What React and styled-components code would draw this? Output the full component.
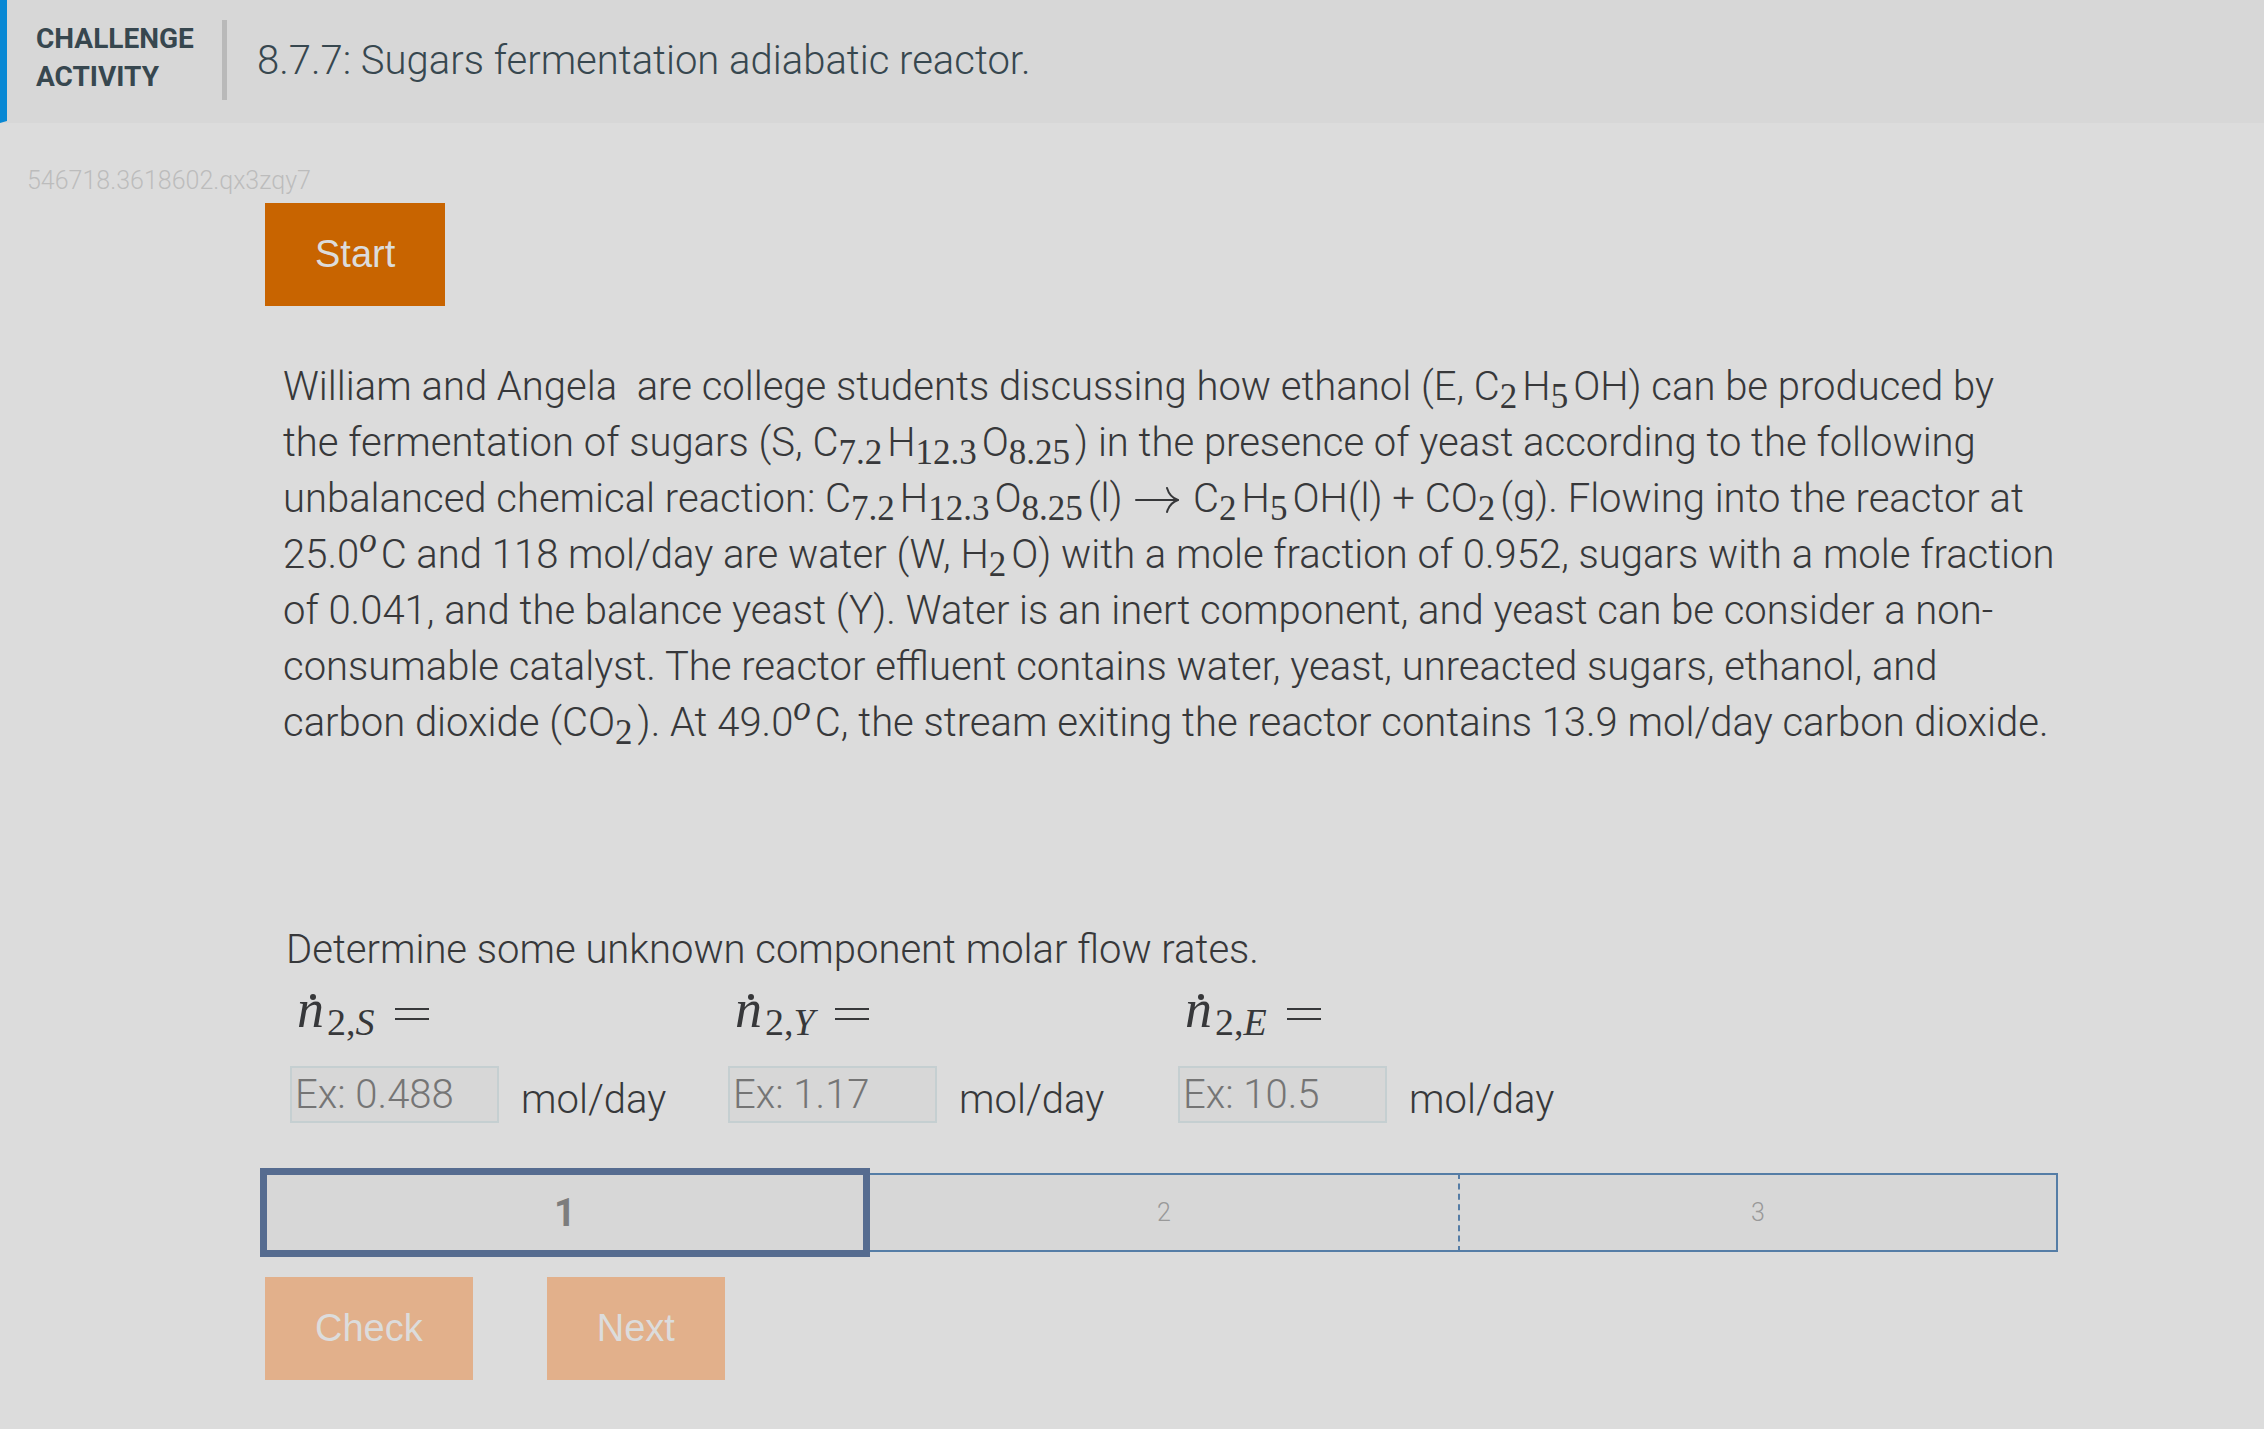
import { useState } from 'react'
import styled, { createGlobalStyle } from 'styled-components'

const GlobalStyle = createGlobalStyle`
    * {
        box-sizing: border-box;
    }

    body {
        margin: 0;
        background: #dcdcdc;
        color: #37383a;
        font-family: Roboto, sans-serif;
        font-weight: 300;
    }
`
const Header = styled.header`
    display: flex;
    align-items: flex-start;
    height: 123px;
    padding: 20px 29px 0;
    background: #d7d7d7;
    border-left: 7px solid #0888d4;
    border-bottom: 2px solid #d7d7d7;
    color: #37474f;
`
const HeaderLabel = styled.div`
    width: 186px;
    font-size: 28px;
    font-weight: 700;
    line-height: 38px;
    text-transform: uppercase;
`
const HeaderTitle = styled.h1`
    display: flex;
    align-items: center;
    height: 80px;
    margin: 0;
    padding-left: 30px;
    border-left: 5px solid #b9b9b9;
    font-size: 40px;
    font-weight: 300;
`
const Main = styled.main`
    padding: 44px 206px 49px 265px;
`
const ActivityId = styled.div`
    margin-left: -238px;
    color: #bcbcbc;
    font-size: 25px;
    line-height: 28px;
`
const Button = styled.button`
    height: 103px;
    padding: 0 50px;
    border: 0;
    background: #c86400;
    color: #dcdcdc;
    font-family: "Liberation Sans", Arial, sans-serif;
    font-size: 38px;
    cursor: pointer;

    &:disabled {
        background: #e2b08b;
        cursor: default;
    }
`
const StartButton = styled(Button)`
    display: block;
    margin-top: 8px;
`
const Problem = styled.p`
    margin: 53px 0 0 18px;
    font-size: 40px;
    line-height: 56px;
`
const Sub = styled.sub`
    margin-right: 5px;
    font-family: "Liberation Serif", serif;
    font-size: 35px;
    font-weight: 400;
    line-height: 0;
    vertical-align: -8px;
`
const Degree = styled.sup`
    margin-right: 4px;
    font-family: "Liberation Serif", serif;
    font-size: 35px;
    font-style: italic;
    font-weight: 400;
    line-height: 0;
    vertical-align: 16px;
`
const ArrowIcon = styled.svg`
    width: 44px;
    height: 26px;
    margin: 0 4px 0 3px;
    vertical-align: -1px;
`
const Question = styled.section`
    margin: 171px 0 0 21px;
`
const Prompt = styled.p`
    margin: 0;
    font-size: 40px;
    line-height: 56px;
`
const Fields = styled.div`
    display: grid;
    grid-template-columns: 438px 450px auto;
    margin-left: 4px;
`
const Field = styled.div`
    display: flex;
    flex-direction: column;
`
const FieldLabel = styled.label`
    display: block;
    height: 88px;
    padding-left: 7px;
    font-family: "Liberation Serif", serif;
    font-size: 54px;
    font-weight: 400;
    line-height: 62px;
`
const Symbol = styled.span`
    position: relative;
    font-style: italic;

    &::after {
        content: '';
        position: absolute;
        top: 15px;
        left: 13px;
        width: 6px;
        height: 6px;
        border-radius: 50%;
        background: currentColor;
    }
`
const Index = styled.sub`
    margin-left: 3px;
    font-size: 38px;
    line-height: 0;
    vertical-align: -8px;
`
const Equals = styled.svg`
    width: 34px;
    height: 16px;
    margin-left: 20px;
    vertical-align: 5px;
`
const FieldRow = styled.div`
    display: flex;
    gap: 22px;
`
const Input = styled.input`
    width: 209px;
    height: 57px;
    padding: 0 3px 1px;
    border: 2px solid #c5cfd1;
    background: #d7d7d7;
    color: #37383a;
    font-family: inherit;
    font-size: 40px;
    font-weight: 300;

    &::placeholder {
        color: #757575;
    }
`
const Unit = styled.span`
    padding-top: 6px;
    font-size: 40px;
    line-height: 56px;
`
const Levels = styled.ol`
    display: grid;
    grid-template-columns: 610fr 588fr 600fr;
    align-items: center;
    margin: 40px 0 0 -5px;
    padding: 0;
    list-style: none;
`
const Level = styled.li`
    display: flex;
    align-items: center;
    justify-content: center;
    height: ${({ $active }) => ($active ? '89px' : '79px')};
    background: #d7d7d7;
    border: solid ${({ $active }) => ($active ? '#566c90' : '#557da6')};
    border-width: ${({ $active }) => ($active ? '7px' : '2px 0')};
    color: ${({ $active }) => ($active ? '#7d7d7d' : '#999999')};
    font-size: ${({ $active }) => ($active ? '38px' : '25px')};
    font-weight: ${({ $active }) => ($active ? 700 : 300)};

    &:last-child {
        border-right-width: 2px;
        border-left: 2px dashed #557da6;
    }
`
const Actions = styled.div`
    display: flex;
    gap: 74px;
    margin-top: 20px;
`

const fields = [
    { id: 'flow-s', name: 'S', example: 'Ex: 0.488' },
    { id: 'flow-y', name: 'Y', example: 'Ex: 1.17' },
    { id: 'flow-e', name: 'E', example: 'Ex: 10.5' },
]

const Ethanol = () => <>C<Sub>2</Sub>H<Sub>5</Sub>OH</>

const Sugars = () => <>C<Sub>7.2</Sub>H<Sub>12.3</Sub>O<Sub>8.25</Sub></>

const Arrow = () => (
    <ArrowIcon viewBox="0 0 44 26" fill="none" stroke="currentColor" strokeWidth="2" strokeLinecap="round">
        <path d="M1 13H42" />
        <path d="M32 1C34 8 37 11 43 13C37 15 34 18 32 25" />
    </ArrowIcon>
)

const App = () => {

    const [values, setValues] = useState({})
    const [level] = useState(1)

    const handleChange = (e) => {
        setValues({ ...values, [e.target.id]: e.target.value })
    }

  return (
    <>
        <GlobalStyle />
        <Header>
            <HeaderLabel>Challenge<br />activity</HeaderLabel>
            <HeaderTitle>8.7.7: Sugars fermentation adiabatic reactor.</HeaderTitle>
        </Header>
        <Main>
            <ActivityId>546718.3618602.qx3zqy7</ActivityId>
            <StartButton type="button">Start</StartButton>
            <Problem>
                William and Angela&nbsp; are college students discussing how ethanol (E, <Ethanol />) can be produced by<br />
                the fermentation of sugars (S, <Sugars />) in the presence of yeast according to the following<br />
                unbalanced chemical reaction: <Sugars />(l) <Arrow /> <Ethanol />(l) + CO<Sub>2</Sub>(g). Flowing into the reactor at<br />
                25.0<Degree>o</Degree>C and 118 mol/day are water (W, H<Sub>2</Sub>O) with a mole fraction of 0.952, sugars with a mole fraction<br />
                of 0.041, and the balance yeast (Y). Water is an inert component, and yeast can be consider a non-<br />
                consumable catalyst. The reactor effluent contains water, yeast, unreacted sugars, ethanol, and<br />
                carbon dioxide (CO<Sub>2</Sub>). At 49.0<Degree>o</Degree>C, the stream exiting the reactor contains 13.9 mol/day carbon dioxide.
            </Problem>
            <Question>
                <Prompt>Determine some unknown component molar flow rates.</Prompt>
                <Fields>
                    {fields.map(({ id, name, example }) => (
                        <Field key={id}>
                            <FieldLabel htmlFor={id}>
                                <Symbol>n</Symbol>
                                <Index>2,<i>{name}</i></Index>
                                <Equals viewBox="0 0 34 16" stroke="currentColor" strokeWidth="2">
                                    <path d="M0 3H34M0 13H34" />
                                </Equals>
                            </FieldLabel>
                            <FieldRow>
                                <Input
                                    id={id}
                                    type="text"
                                    placeholder={example}
                                    value={values[id] || ''}
                                    onChange={handleChange}
                                />
                                <Unit>mol/day</Unit>
                            </FieldRow>
                        </Field>
                    ))}
                </Fields>
            </Question>
            <Levels>
                {[1, 2, 3].map((n) => (
                    <Level key={n} $active={n === level}>{n}</Level>
                ))}
            </Levels>
            <Actions>
                <Button type="button" disabled>Check</Button>
                <Button type="button" disabled>Next</Button>
            </Actions>
        </Main>
    </>
  )
}

export default App
